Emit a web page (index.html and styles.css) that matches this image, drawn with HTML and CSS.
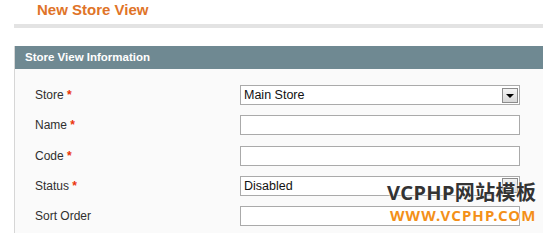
FILE: index.html
```html
<!DOCTYPE html>
<html>
<head>
<meta charset="utf-8">
<link rel="stylesheet" href="styles.css">
</head>
<body>
<div class="page">
  <h3 class="title">New Store View</h3>
  <div class="rule"></div>
  <div class="panel">
    <div class="panel-head">Store View Information</div>
    <div class="fieldset">
      <div class="row">
        <label class="label">Store <span class="req">*</span></label>
        <div class="select"><span class="value">Main Store</span><span class="btn"><span class="arrow"></span></span></div>
      </div>
      <div class="row">
        <label class="label">Name <span class="req">*</span></label>
        <input class="input" type="text">
      </div>
      <div class="row">
        <label class="label">Code <span class="req">*</span></label>
        <input class="input" type="text">
      </div>
      <div class="row">
        <label class="label">Status <span class="req">*</span></label>
        <div class="select"><span class="value">Disabled</span><span class="btn"><span class="arrow"></span></span></div>
      </div>
      <div class="row">
        <label class="label">Sort Order</label>
        <input class="input" type="text">
      </div>
    </div>
  </div>
  <div class="watermark">
    <div class="wm-top">VCPHP网站模板</div>
    <div class="wm-bottom">WWW.VCPHP.COM</div>
  </div>
</div>
</body>
</html>
```

FILE: styles.css
```css
html, body {
  margin: 0;
  padding: 0;
  background: #ffffff;
}
body {
  font-family: "Liberation Sans", Arial, sans-serif;
  font-size: 12px;
  color: #2f2f2f;
}
.page {
  position: relative;
  width: 543px;
  height: 233px;
  overflow: hidden;
}
.title {
  margin: 0;
  padding-left: 37px;
  font-size: 15px;
  line-height: 19px;
  font-weight: bold;
  color: #df7428;
}
.rule {
  margin: 5px 0 18px 14px;
  height: 4px;
  background: #e3e3e3;
}
.panel {
  margin-left: 14px;
  border-left: 1px solid #d6d6d6;
  background: #fafafa;
  height: 200px;
}
.panel-head {
  height: 23px;
  line-height: 23px;
  padding-left: 10px;
  background: #6f8992;
  color: #ffffff;
  font-weight: bold;
  font-size: 11.5px;
}
.fieldset {
  padding: 16px 0 0 20px;
  display: flex;
  flex-direction: column;
  gap: 10.25px;
}
.row {
  display: flex;
  align-items: center;
  height: 20px;
}
.label {
  width: 205px;
  font-size: 12px;
  color: #2f2f2f;
}
.req {
  color: #eb340a;
  font-weight: bold;
}
.input {
  box-sizing: border-box;
  width: 280px;
  height: 20px;
  margin: 0;
  padding: 0 3px;
  border: 1px solid #aaaaaa;
  background: #ffffff;
  font: 12px "Liberation Sans", Arial, sans-serif;
}
.select {
  box-sizing: border-box;
  width: 280px;
  height: 20px;
  border: 1px solid #aaaaaa;
  background: #ffffff;
  display: flex;
  align-items: center;
  justify-content: space-between;
  padding: 0 1px 0 3px;
}
.value {
  font-size: 12.5px;
  color: #111111;
}
.btn {
  box-sizing: border-box;
  width: 16px;
  height: 15px;
  border: 1px solid #8c8c8c;
  background: linear-gradient(#f4f4f4, #d8d8d8);
  display: flex;
  align-items: center;
  justify-content: center;
}
.arrow {
  width: 0;
  height: 0;
  border-left: 4px solid transparent;
  border-right: 4px solid transparent;
  border-top: 4px solid #000000;
  margin-top: 1px;
}
.watermark {
  position: absolute;
  left: 387px;
  top: 179px;
  font-weight: bold;
  text-shadow: 0 0 2px #ffffff, 0 0 2px #ffffff;
}
.wm-top {
  font-family: "Noto Sans", "Noto Sans CJK SC", sans-serif;
  font-size: 20px;
  letter-spacing: 0.4px;
  line-height: 28px;
  color: #333333;
  white-space: nowrap;
}
.wm-bottom {
  font-family: "Noto Sans", "Noto Sans CJK SC", sans-serif;
  font-size: 15px;
  letter-spacing: 1.1px;
  line-height: 16px;
  color: #f39019;
  white-space: nowrap;
  padding-left: 3px;
}
```
